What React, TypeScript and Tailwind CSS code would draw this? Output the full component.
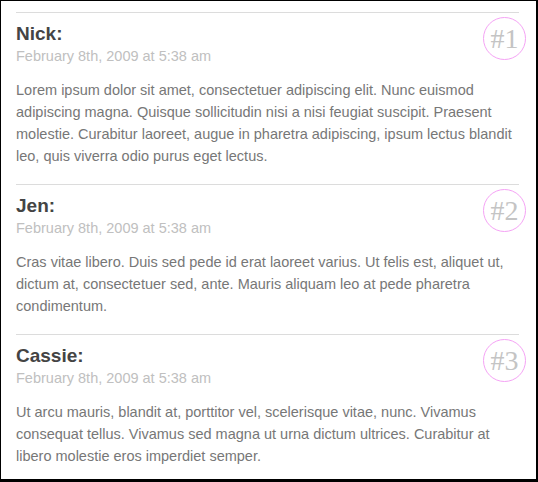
const comments = [
  {
    num: 1,
    name: 'Nick',
    date: 'February 8th, 2009 at 5:38 am',
    body: 'Lorem ipsum dolor sit amet, consectetuer adipiscing elit. Nunc euismod adipiscing magna. Quisque sollicitudin nisi a nisi feugiat suscipit. Praesent molestie. Curabitur laoreet, augue in pharetra adipiscing, ipsum lectus blandit leo, quis viverra odio purus eget lectus.',
  },
  {
    num: 2,
    name: 'Jen',
    date: 'February 8th, 2009 at 5:38 am',
    body: 'Cras vitae libero. Duis sed pede id erat laoreet varius. Ut felis est, aliquet ut, dictum at, consectetuer sed, ante. Mauris aliquam leo at pede pharetra condimentum.',
  },
  {
    num: 3,
    name: 'Cassie',
    date: 'February 8th, 2009 at 5:38 am',
    body: 'Ut arcu mauris, blandit at, porttitor vel, scelerisque vitae, nunc. Vivamus consequat tellus. Vivamus sed magna ut urna dictum ultrices. Curabitur at libero molestie eros imperdiet semper.',
  },
]

export default function App() {
  return (
    <div className="w-[538px] h-[482px] bg-white border-t border-l border-r-2 border-b-[3px] border-black pt-[11px] pl-[15px] pr-[17px] font-['Liberation_Sans',Arial,sans-serif] overflow-hidden">
      {comments.map((c) => (
        <div
          key={c.num}
          className="relative border-t border-[#dcdcdc] pt-[9px] pb-[17px]"
        >
          {/* number badge in the corner */}
          <div className="absolute top-[4px] -right-[7px] w-[43px] h-[43px] rounded-full border border-[#f5a3f5] flex items-center justify-center">
            <span className="font-['Liberation_Serif',Georgia,serif] text-[28px] leading-none text-[#c4c4c4]">
              #{c.num}
            </span>
          </div>
          <h3 className="text-[19px] leading-[24px] font-bold text-[#444]">
            {c.name}:
          </h3>
          <div className="text-[14.5px] leading-[21px] text-[#c0c0c0]">{c.date}</div>
          <p className="mt-3 text-[14.5px] leading-[22px] text-[#777]">{c.body}</p>
        </div>
      ))}
    </div>
  )
}
